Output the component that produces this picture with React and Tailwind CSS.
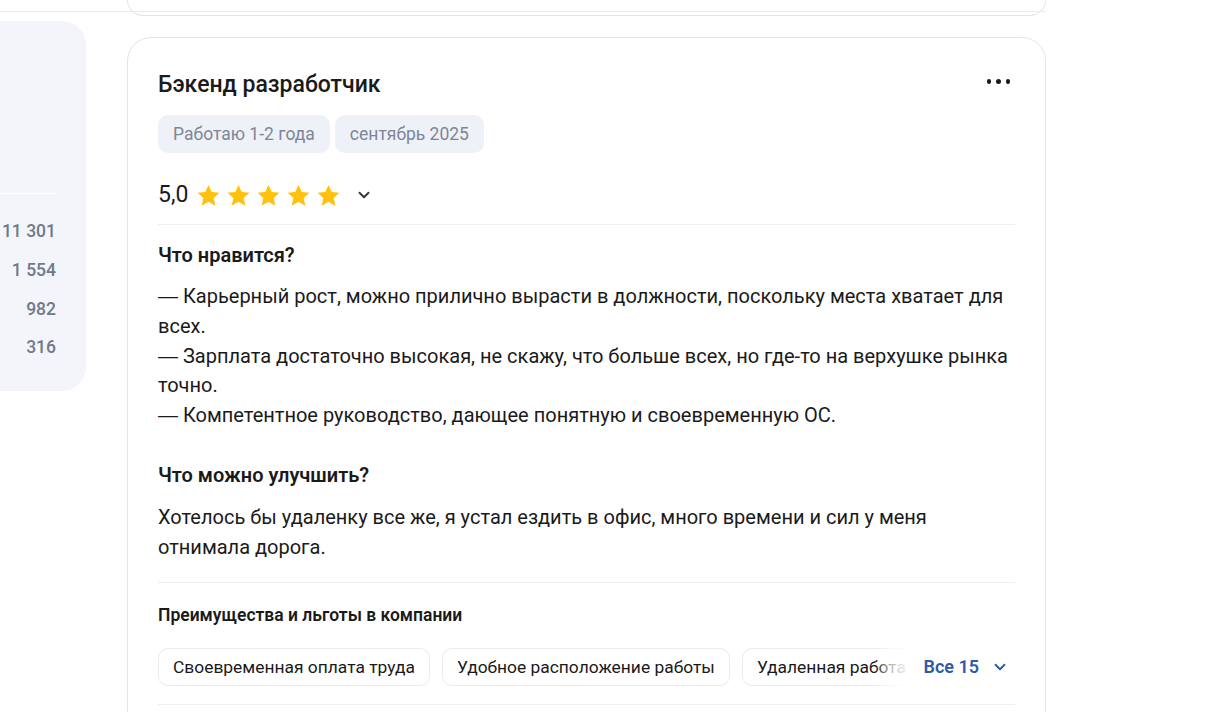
import React from 'react';
import { ChevronDown } from 'lucide-react';

const stats = ['11 301', '1 554', '982', '316'];

const perks = [
  'Своевременная оплата труда',
  'Удобное расположение работы',
  'Удаленная работа',
  'ДМС',
];

function Star() {
  return (
    <svg viewBox="0 0 24 24" className="w-[25px] h-[25px]" fill="#ffc10b">
      <path d="M12 1.8l3.1 6.9 7.4.7-5.6 5 1.7 7.4L12 18l-6.6 3.8 1.7-7.4-5.6-5 7.4-.7z" />
    </svg>
  );
}

function Dash() {
  return <span style={{ fontFamily: '"Liberation Sans", sans-serif' }}>—</span>;
}

export default function App() {
  return (
    <div className="relative w-[1206px] h-[712px] overflow-hidden bg-white text-[#1a1a1a]" style={{ fontFamily: 'Roboto, "Noto Sans", sans-serif' }}>
      {/* top strip line */}
      <div className="absolute left-0 top-[11px] w-[1046px] h-px bg-[#e9ecf1]" />

      <div className="flex gap-[41px]">
        {/* left stats panel */}
        <div className="mt-[21px] w-[86px] h-[370px] bg-[#f4f5fa] rounded-br-[24px] rounded-tr-[24px] pr-[30px] shrink-0">
          <div className="mt-[172px] h-px bg-white" />
          <div className="pt-[18px] flex flex-col items-end">
            {stats.map((s) => (
              <div key={s} className="h-[38.7px] flex items-center text-[17.5px] font-medium text-[#6e7a8c]">
                {s}
              </div>
            ))}
          </div>
        </div>

        {/* main column */}
        <div className="w-[919px] shrink-0">
          {/* previous card tail */}
          <div className="h-[16px] border border-t-0 border-[#e1e5ec] rounded-b-[24px]" />

          {/* review card */}
          <div className="mt-[21px] border border-[#e1e5ec] rounded-[24px] px-[30px] pt-[32px]">
            <div className="flex items-center justify-between h-[30px]">
              <h2 className="text-[23px] font-medium leading-[30px]">Бэкенд разработчик</h2>
              <div className="flex gap-[5px] mr-[5px] -mt-[7px]">
                <span className="w-[4.5px] h-[4.5px] rounded-full bg-[#1a1a1a]" />
                <span className="w-[4.5px] h-[4.5px] rounded-full bg-[#1a1a1a]" />
                <span className="w-[4.5px] h-[4.5px] rounded-full bg-[#1a1a1a]" />
              </div>
            </div>

            <div className="mt-[15px] flex gap-[5px]">
              <span className="h-[38px] px-[15px] flex items-center rounded-[10px] bg-[#eef1f7] text-[17.5px] text-[#7d8696]">Работаю 1-2 года</span>
              <span className="h-[38px] px-[15px] flex items-center rounded-[10px] bg-[#eef1f7] text-[17.5px] text-[#7d8696]">сентябрь 2025</span>
            </div>

            <div className="mt-[27px] flex items-center h-[30px]">
              <span className="text-[23px] leading-[30px] font-normal">5,0</span>
              <div className="ml-[8px] flex gap-[5px]">
                <Star />
                <Star />
                <Star />
                <Star />
                <Star />
              </div>
              <ChevronDown className="ml-[14px] w-[18px] h-[18px] text-[#333]" strokeWidth={2.5} />
            </div>

            <div className="mt-[14px] h-px bg-[#eef0f4]" />

            <h3 className="mt-[17px] text-[20px] leading-[26px] font-semibold">Что нравится?</h3>
            <p className="mt-[14px] text-[20px] leading-[29.8px]">
              <Dash /> Карьерный рост, можно прилично вырасти в должности, поскольку места хватает для всех.
              <br />
              <Dash /> Зарплата достаточно высокая, не скажу, что больше всех, но где-то на верхушке рынка точно.
              <br />
              <Dash /> Компетентное руководство, дающее понятную и своевременную ОС.
            </p>

            <h3 className="mt-[31px] text-[20px] leading-[26px] font-semibold">Что можно улучшить?</h3>
            <p className="mt-[15px] text-[20px] leading-[29.8px]">
              Хотелось бы удаленку все же, я устал ездить в офис, много времени и сил у меня отнимала дорога.
            </p>

            <div className="mt-[19px] h-px bg-[#eef0f4]" />

            <h4 className="mt-[21px] text-[17.5px] leading-[22px] font-semibold">Преимущества и льготы в компании</h4>

            <div className="mt-[22px] flex items-center">
              <div className="relative flex-1 overflow-hidden">
                <div className="flex gap-[12px]">
                  {perks.map((p) => (
                    <span key={p} className="h-[38px] px-[14px] shrink-0 flex items-center rounded-[10px] border border-[#e8eaef] text-[17.4px] whitespace-nowrap">
                      {p}
                    </span>
                  ))}
                </div>
                <div className="absolute right-0 top-0 h-full w-[32px] bg-gradient-to-r from-white/0 via-white/70 to-white/95" />
              </div>
              <button className="ml-[16px] flex items-center gap-[12px] pr-[6px] text-[18px] font-semibold text-[#2d5ba8]">
                Все 15
                <ChevronDown className="w-[18px] h-[18px]" strokeWidth={2.5} />
              </button>
            </div>

            <div className="mt-[18px] h-px bg-[#eef0f4]" />
            <div className="h-[40px]" />
          </div>
        </div>
      </div>
    </div>
  );
}
